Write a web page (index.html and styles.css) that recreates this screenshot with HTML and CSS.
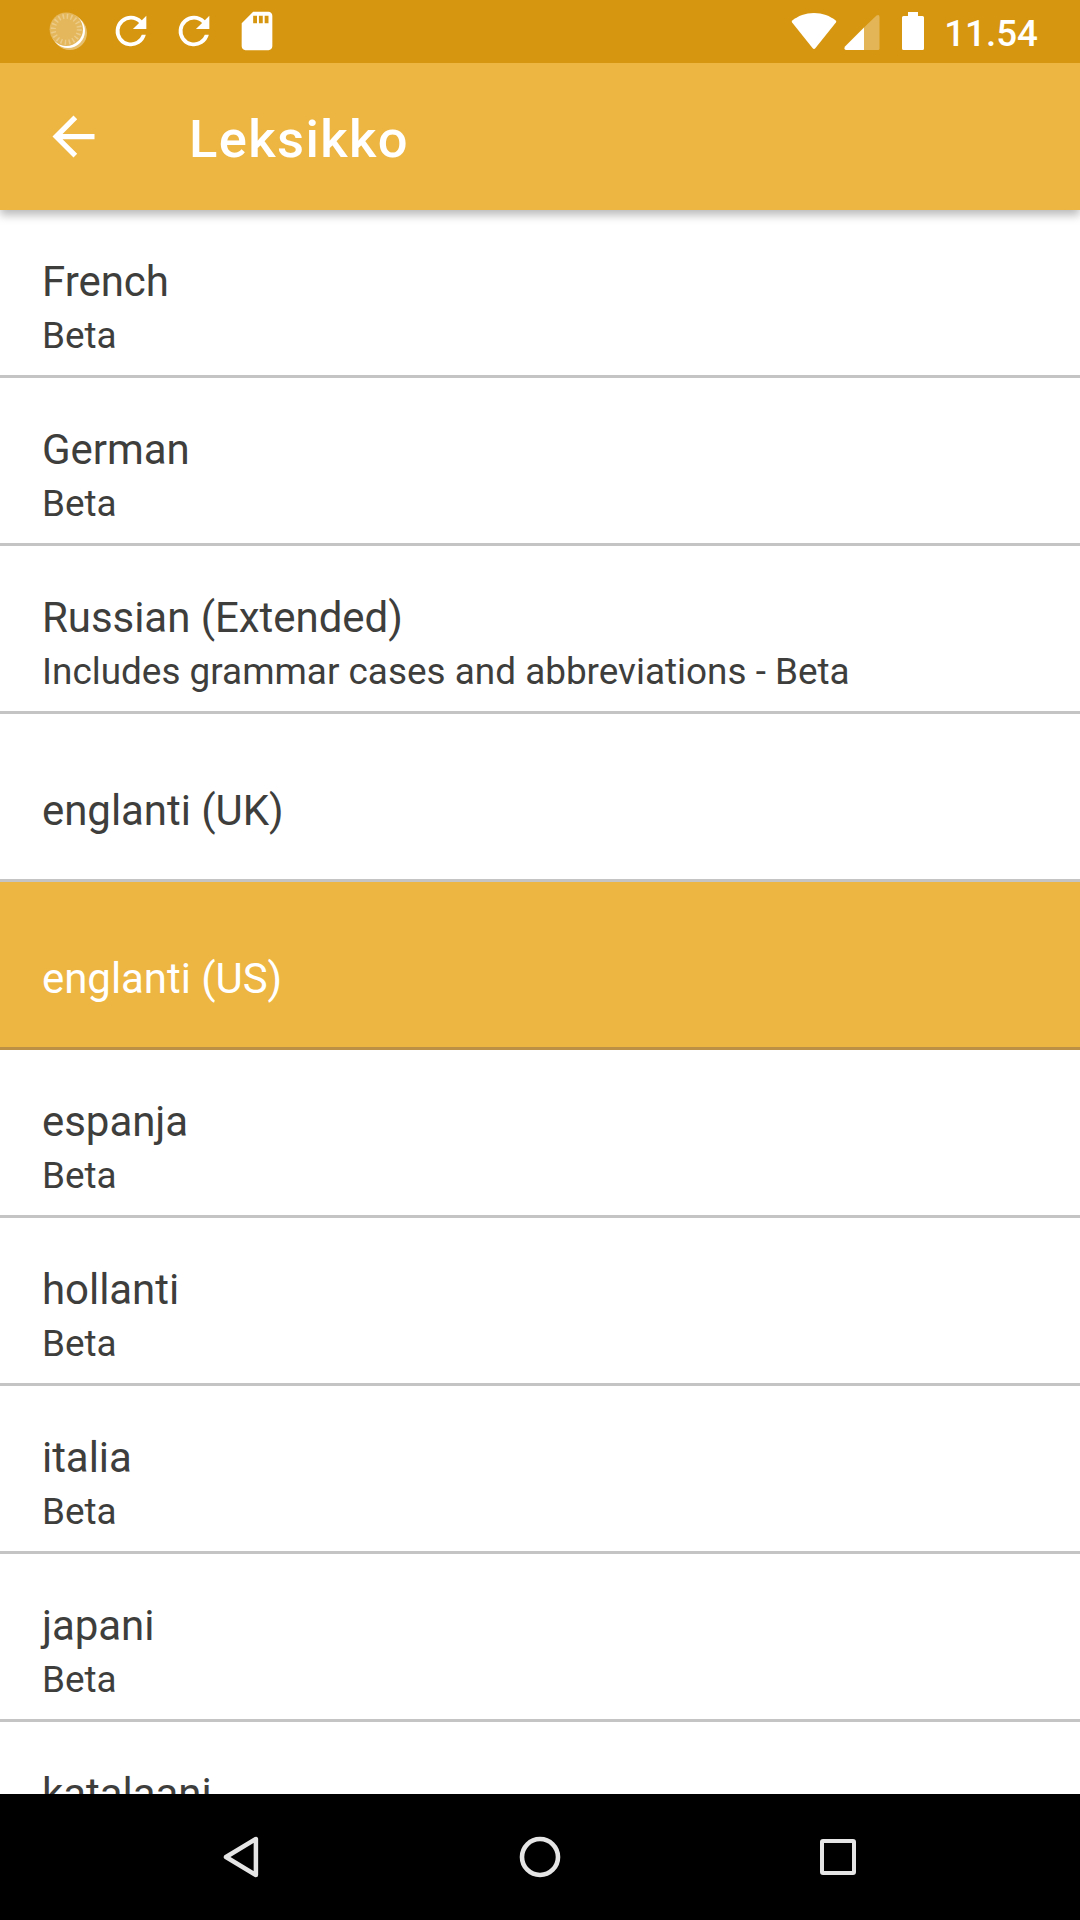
FILE: index.html
```html
<!DOCTYPE html>
<html lang="fi">
<head>
<meta charset="utf-8">
<title>Leksikko</title>
<link rel="stylesheet" href="styles.css">
</head>
<body>
<div class="screen">
  <div class="status">
    <div class="notifications">
      <svg class="notice" viewBox="0 0 46 46"><circle cx="24.800" cy="24.800" r="17.200" fill="#fff" fill-opacity=".4"/><circle cx="23" cy="23" r="17" fill="#fff"/><circle cx="21.300" cy="21.300" r="16.700" fill="#e4b75c"/><circle cx="21.300" cy="21.300" r="13" fill="none" stroke="#eccb88" stroke-width="5" stroke-dasharray="1.500 2.584"/></svg>
      <svg class="notice" viewBox="0 0 24 24"><path fill="#fff" d="M17.65 6.35A7.96 7.96 0 0 0 12 4a8 8 0 1 0 7.73 10h-2.08A6 6 0 1 1 12 6c1.66 0 3.14.69 4.22 1.78L13 11h7V4z"/></svg>
      <svg class="notice" viewBox="0 0 24 24"><path fill="#fff" d="M17.65 6.35A7.96 7.96 0 0 0 12 4a8 8 0 1 0 7.73 10h-2.08A6 6 0 1 1 12 6c1.66 0 3.14.69 4.22 1.78L13 11h7V4z"/></svg>
      <svg class="notice" viewBox="0 0 24 24"><path fill="#fff" d="M18 2h-8L4.020 8 4 20c0 1.100.9 2 2 2h12c1.100 0 2-.9 2-2V4c0-1.100-.9-2-2-2zm-6 6h-2V4h2v4zm3 0h-2V4h2v4zm3 0h-2V4h2v4z"/></svg>
    </div>
    <div class="system">
      <svg class="wifi" viewBox="0 0 46 38"><path fill="#fff" d="M23 1C14.500 1 7 4 1.300 8.400Q.2 9.300 1.100 10.600L21.500 36Q23 37.800 24.500 36L44.900 10.600Q45.800 9.300 44.700 8.400C39 4 31.500 1 23 1Z"/></svg>
      <svg class="signal" viewBox="0 0 36 36"><path fill="#fff" fill-opacity=".3" d="M20 12.500 32.500.5Q35.500-1 35.500 2V33.500Q35.500 35 34 35H20Z"/><path fill="#fff" d="M20 12.500V35H2Q-.5 34.500 1 31.500Z"/></svg>
      <svg class="battery" viewBox="0 0 22 38"><path fill="#fff" d="M6 0H16V4H20.500Q22 4 22 5.500V36.500Q22 38 20.500 38H1.500Q0 38 0 36.500V5.500Q0 4 1.500 4H6Z"/></svg>
      <span class="clock">11.54</span>
    </div>
  </div>
  <header class="appbar">
    <svg class="back" viewBox="0 0 24 24"><path fill="#fff" d="M20 11H7.830l5.590-5.590L12 4l-8 8 8 8 1.410-1.410L7.830 13H20v-2z"/></svg>
    <h1 class="title">Leksikko</h1>
  </header>
  <main class="list">
    <div class="row"><div class="name">French</div><div class="note">Beta</div></div>
    <div class="row"><div class="name">German</div><div class="note">Beta</div></div>
    <div class="row"><div class="name">Russian (Extended)</div><div class="note">Includes grammar cases and abbreviations - Beta</div></div>
    <div class="row single"><div class="name">englanti (UK)</div></div>
    <div class="row single selected"><div class="name">englanti (US)</div></div>
    <div class="row"><div class="name">espanja</div><div class="note">Beta</div></div>
    <div class="row"><div class="name">hollanti</div><div class="note">Beta</div></div>
    <div class="row"><div class="name">italia</div><div class="note">Beta</div></div>
    <div class="row"><div class="name">japani</div><div class="note">Beta</div></div>
    <div class="row"><div class="name">katalaani</div></div>
  </main>
  <nav class="navbar">
    <svg class="key" viewBox="0 0 48 48"><path d="M8 24 37.900 6V42Z" stroke-width="4.500"/></svg>
    <svg class="key" viewBox="0 0 48 48"><circle cx="24" cy="24" r="18" stroke-width="4.600"/></svg>
    <svg class="key" viewBox="0 0 48 48"><rect x="8" y="8" width="32" height="32" rx="1" stroke-width="4"/></svg>
  </nav>
</div>
</body>
</html>
```
FILE: styles.css
```css
* { box-sizing: border-box; }
body { margin: 0; font-family: Roboto, sans-serif; }
svg { display: block; flex: none; }

.screen {
  display: flex;
  flex-direction: column;
  width: 1080px;
  height: 1920px;
  overflow: hidden;
  background: #fff;
}

.status {
  flex: none;
  z-index: 2;
  display: flex;
  justify-content: space-between;
  height: 63px;
  padding: 0 42px 0 45px;
  background: #d7960f;
}
.notifications { display: flex; gap: 17px; padding-top: 8px; }
.notice { width: 46px; height: 46px; }
.system { display: flex; align-items: flex-start; }
.wifi { width: 46px; height: 38px; margin: 12px 7px 0 0; }
.signal { width: 36px; height: 36px; margin: 15px 22px 0 0; }
.battery { width: 22px; height: 38px; margin: 12px 20px 0 0; }
.clock {
  padding-top: 12px;
  font-size: 36.75px;
  font-weight: 500;
  line-height: 43px;
  color: #fff;
}

.appbar {
  flex: none;
  z-index: 1;
  display: flex;
  align-items: center;
  gap: 84px;
  height: 147px;
  padding-left: 42px;
  background: #edb542;
  box-shadow: 0 5px 9px rgba(0, 0, 0, .28);
}
.back { width: 63px; height: 63px; }
.title {
  margin: 4px 0 0;
  font-size: 52.5px;
  font-weight: 500;
  line-height: 62px;
  letter-spacing: 1.4px;
  color: #fff;
}

.list { flex: 1; min-height: 0; overflow: hidden; }
.row {
  height: 168px;
  padding: 47px 42px 0;
  border-bottom: 3px solid #c4c4c4;
  color: #3e3e3c;
}
.name { font-size: 42px; line-height: 50px; letter-spacing: -.05px; }
.note { margin-top: 7px; font-size: 36.9px; line-height: 44px; }
.single { padding-top: 72px; }
.selected { background: #edb542; border-color: #bd9145; color: #fff; }

.navbar {
  flex: none;
  display: grid;
  grid-template-columns: repeat(3, 298px);
  place-content: center;
  place-items: center;
  height: 126px;
  background: #000;
}
.key { width: 48px; height: 48px; fill: none; stroke: #e5e5e5; stroke-linejoin: round; }
```
